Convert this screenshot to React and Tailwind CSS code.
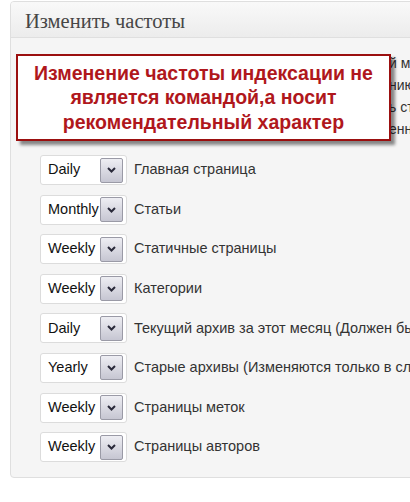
import React from "react";

const rows = [
  ["Daily", "Главная страница"],
  ["Monthly", "Статьи"],
  ["Weekly", "Статичные страницы"],
  ["Weekly", "Категории"],
  ["Daily", "Текущий архив за этот месяц (Должен быть таким же как и для главной страницы)"],
  ["Yearly", "Старые архивы (Изменяются только в случае, если вы редактируете старые статьи)"],
  ["Weekly", "Страницы меток"],
  ["Weekly", "Страницы авторов"],
];

const lines = [
  ["Пожалуйста, обратите внимание, что значение этого тега считается подсказкой, а не командой. Несмотря на то, что поисковые роботы учитывают эту информацию при принятии решени", "й м"],
  ["огут сканировать страницы, помеченные «ежечасно» реже, чем указано, а страницы, помеченные «ежегодно» – чаще. Вероятно также, что роботы будут периодически скан", "нию"],
  ["страницы, помеченные «никогда», чтобы отслеживать неожиданные изменения на этих страницах и обновлят", "ь ст"],
  ["раницы в поиске. Это поле задаёт частоту, с которой поисковый робот будет посещать определ", "енн"],
];

function Chevron() {
  return (
    <svg width="9" height="6" viewBox="0 0 9 6" fill="none">
      <path d="M1 1l3.5 3.5L8 1" stroke="#2a2a3a" strokeWidth="2" />
    </svg>
  );
}

export default function App() {
  return (
    <div className="w-[410px] h-[502px] bg-white overflow-hidden pl-[10px] pt-[1px]" style={{ fontFamily: "'Liberation Sans', Arial, sans-serif" }}>
      <div className="w-[420px] h-[477px] border border-[#dfdfdf] rounded-[4px] bg-[#f5f5f5] overflow-hidden">
        <div className="h-[36px] border-b border-[#dfdfdf] bg-gradient-to-b from-[#f9f9f9] to-[#ececec] flex items-center pl-[14px] pt-[3px]">
          <span className="text-[20.5px] text-[#464646]" style={{ fontFamily: "'Liberation Serif', Georgia, serif" }}>Изменить частоты</span>
        </div>
        <div className="relative pt-[14px]">
          <div className="pl-[29px] text-[14px] leading-[22px] text-[#333] overflow-hidden">
            {lines.map(([a, b], i) => (
              <div key={i} className="whitespace-nowrap flex">
                <span className="w-[349px] shrink-0 overflow-hidden">{a}</span>
                <span className="shrink-0">{b}</span>
              </div>
            ))}
          </div>
          <div className="absolute left-[5px] top-[16px] w-[375px] h-[87px] border-2 border-[#9b0f0f] bg-white shadow-[4px_4px_3px_rgba(0,0,0,0.45)] flex flex-col items-center justify-center">
            <div className="text-[#b0171c] font-bold text-[19.5px] leading-[24.5px] text-center">
              Изменение частоты индексации не<br />
              является командой,а носит<br />
              рекомендательный характер
            </div>
          </div>
          <div className="flex flex-col gap-[9.6px] pl-[29px] pt-[15px]">
            {rows.map(([v, label], i) => (
              <div key={i} className="flex items-center h-[30px]">
                <div className="shrink-0 w-[87px] h-[30px] bg-white border border-[#dcdcdc] rounded-[3px] flex items-center justify-between pl-[7px] pr-[3px]">
                  <span className="text-[14.5px] text-[#111]">{v}</span>
                  <div className="w-[23px] h-[25px] border border-[#9a9aa6] rounded-[2px] bg-gradient-to-b from-[#eeeef3] to-[#c6c6d2] flex items-center justify-center">
                    <Chevron />
                  </div>
                </div>
                <span className="ml-[7px] text-[14.5px] text-[#333] whitespace-nowrap">{label}</span>
              </div>
            ))}
          </div>
        </div>
      </div>
    </div>
  );
}
